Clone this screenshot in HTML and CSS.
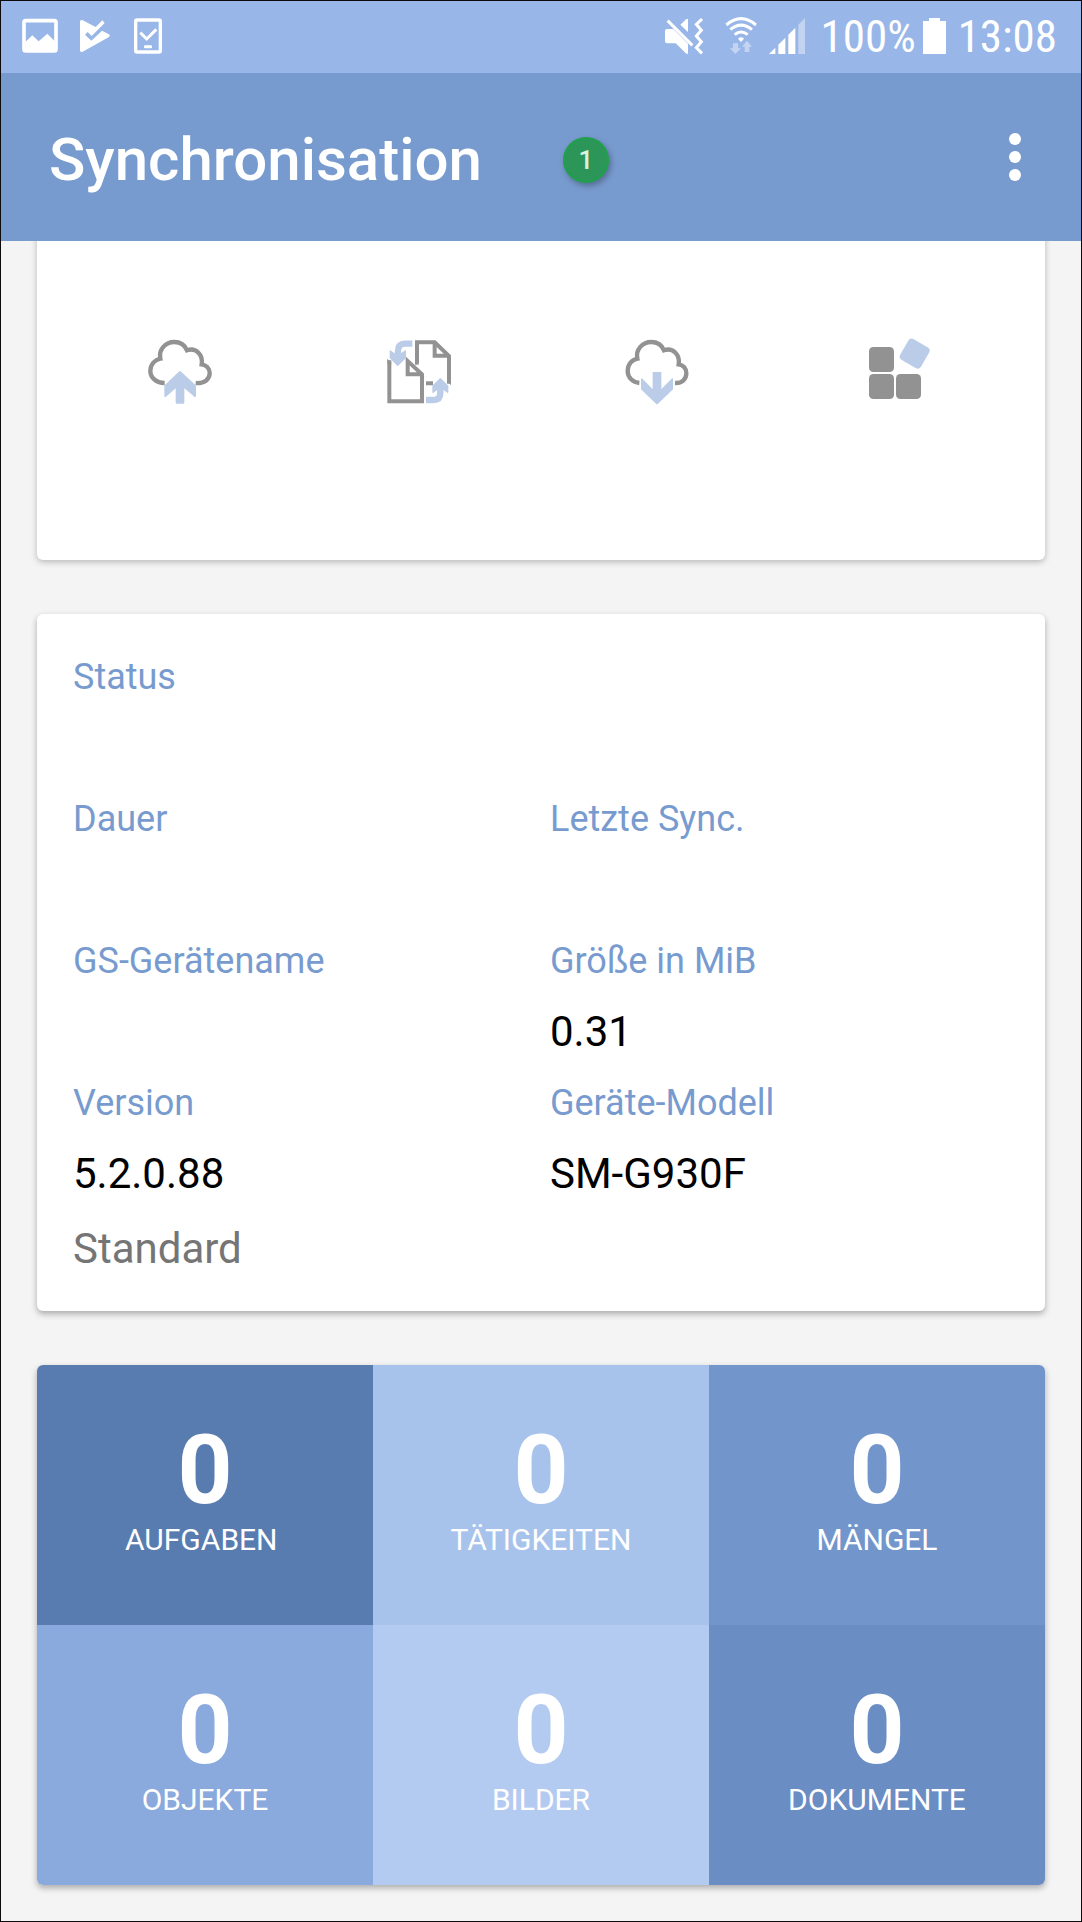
FILE: index.html
```
<!DOCTYPE html>
<html lang="de">
<head>
<meta charset="utf-8">
<meta name="viewport" content="width=device-width, initial-scale=1">
<title>Synchronisation</title>
<link rel="stylesheet" href="styles.css">
</head>
<body>
<div class="statusbar">
  <div class="notifications">
    <svg width="36" height="36" viewBox="66 54 108 108" aria-hidden="true"><rect x="72" y="62" width="96" height="91" rx="5" fill="none" stroke="#fff" stroke-width="11"/><path fill="#fff" d="M76 126L97 106L116 124L142 101L166 125V155H76Z"/></svg>
    <svg width="32" height="36" viewBox="240 54 96 108" aria-hidden="true"><path fill="#fff" d="M240 66Q240 58 248 61L287 81L307 61L314 69L275 108L263 96L255 104L274 122L306 92L327 103Q332 107 327 111L248 155Q240 158 240 150Z"/></svg>
    <svg width="28" height="36" viewBox="402 54 84 108" aria-hidden="true"><rect x="407" y="60" width="74" height="96" rx="4" fill="none" stroke="#fff" stroke-width="10"/><path fill="none" stroke="#fff" stroke-width="9" d="M421 98L440 117L469 88"/><rect x="432" y="136" width="24" height="9" rx="3" fill="#fff"/></svg>
  </div>
  <div class="system">
    <svg class="mute" width="38" height="36" viewBox="69 54 114 108" aria-hidden="true"><path fill="#fff" d="M75 87H94L138 131V161H133L101 130H75Q69 130 69 124V93Q69 87 75 87ZM115 74L133 57H138V96Z"/><path fill="none" stroke="#fff" stroke-width="9" d="M77 62L151 136M180 57L163 73L178 91L163 108L178 125L163 143L180 160"/></svg>
    <svg width="32" height="36" viewBox="250 54 96 108" aria-hidden="true"><g fill="none" stroke="#fff" stroke-width="9"><path d="M254 75Q298 37 343 75"/><path d="M266 89Q298 62 331 89"/><path d="M279 104Q298 88 318 104"/></g><path fill="#fff" d="M289 116Q298 108 307 116L298 126Z"/><path fill="#fff" fill-opacity=".42" d="M274 130H289V145H298L281 162L265 145H274ZM309 156H323V140H331L316 122L301 140H309Z"/></svg>
    <svg width="36" height="36" viewBox="383 54 108 108" aria-hidden="true"><path fill="#fff" d="M383 162L402 143V162ZM411 162V134L432 113V162ZM441 162V104L462 83V162Z"/><path fill="#fff" fill-opacity=".42" d="M471 162V74L491 54V162Z"/></svg>
    <span class="battery">100%<svg width="23" height="36" viewBox="846 54 69 108" aria-hidden="true"><path fill="#fff" d="M864 54H897V63H915V162H846V63H864Z"/></svg></span>
    <time>13:08</time>
  </div>
</div>

<header class="appbar">
  <div class="heading">
    <h1>Synchronisation</h1>
    <span class="badge">1</span>
  </div>
  <button class="menu" type="button" aria-label="Menü"><svg width="12" height="48" viewBox="0 0 12 48" aria-hidden="true"><g fill="#fff"><circle cx="6" cy="6" r="6"/><circle cx="6" cy="24" r="6"/><circle cx="6" cy="42" r="6"/></g></svg></button>
</header>

<main>
  <section class="card actions">
    <button type="button" aria-label="Hochladen"><svg width="72" height="72" viewBox="45 45 216 216" aria-hidden="true"><path fill="none" stroke="#929292" stroke-width="13" d="M107 186C82 186 64 170 64 150C64 130 78 116 94 113C88 85 110 63 136 63C153 63 167 71 174 88C200 78 223 101 218 130C232 132 242 142 242 157C242 175 226 188 200 186"/><path fill="#bacce8" stroke="#bacce8" stroke-width="6" stroke-linejoin="round" d="M153 153L198 195V225L163 195V245H143V195L109 225V195Z"/></svg></button>
    <button type="button" aria-label="Synchronisieren"><svg width="72" height="72" viewBox="759 45 216 216" aria-hidden="true"><g fill="none" stroke="#929292" stroke-width="12"><path d="M861 128V64H914L957 105V188"/><path d="M914 64V104H957M888 187H909"/><path d="M778 118V241H876V160L833 120V160H876"/></g><g fill="#929292"><path d="M772 113L784 125V130H772ZM855 120L867 131H855ZM951 180L963 193V170H951Z"/></g><path fill="none" stroke="#bacce8" stroke-width="19" d="M847 68H825Q804 68 804 90V112M888 237H910Q931 237 931 215V190"/><g fill="#bacce8" stroke="#bacce8" stroke-width="4" stroke-linejoin="round"><path d="M781 90L803 106L826 90V110L803 133L781 110Z"/><path d="M931 173L953 195V214L931 198L909 214V195Z"/></g></svg></button>
    <button type="button" aria-label="Herunterladen"><svg width="72" height="72" viewBox="66 45 216 216" aria-hidden="true"><path fill="none" stroke="#929292" stroke-width="13" d="M121 186C102 184 86 170 86 150C86 130 99 116 115 113C109 85 131 63 157 63C174 63 188 71 195 88C221 78 244 101 239 130C253 132 262 142 262 157C262 175 249 187 228 186"/><path fill="#bacce8" stroke="#bacce8" stroke-width="4" stroke-linejoin="round" d="M163 155H185V209L220 174V204L174 248L128 204V174L163 209Z"/></svg></button>
    <button type="button" aria-label="Module"><svg width="72" height="72" viewBox="783 45 216 216" aria-hidden="true"><g fill="#929292"><rect x="810" y="78" width="75" height="75" rx="13"/><rect x="810" y="159" width="75" height="75" rx="13"/><rect x="891" y="159" width="75" height="75" rx="13"/></g><rect x="911" y="62" width="72" height="72" rx="12" fill="#bacce8" transform="rotate(30 947 98)"/></svg></button>
  </section>

  <section class="card details">
    <dl>
      <div class="wide"><dt>Status</dt><dd></dd></div>
      <div><dt>Dauer</dt><dd></dd></div>
      <div><dt>Letzte Sync.</dt><dd></dd></div>
      <div><dt>GS-Gerätename</dt><dd></dd></div>
      <div><dt>Größe in MiB</dt><dd>0.31</dd></div>
      <div><dt>Version</dt><dd>5.2.0.88</dd></div>
      <div><dt>Geräte-Modell</dt><dd>SM-G930F</dd></div>
    </dl>
    <p class="profile">Standard</p>
  </section>

  <section class="card tiles">
    <div class="tile tasks"><strong>0</strong><span>AUFGABEN&nbsp;</span></div>
    <div class="tile activities"><strong>0</strong><span>TÄTIGKEITEN</span></div>
    <div class="tile defects"><strong>0</strong><span>MÄNGEL</span></div>
    <div class="tile objects"><strong>0</strong><span>OBJEKTE</span></div>
    <div class="tile images"><strong>0</strong><span>BILDER</span></div>
    <div class="tile documents"><strong>0</strong><span>DOKUMENTE</span></div>
  </section>
</main>
</body>
</html>
```
FILE: styles.css
```
* {
  box-sizing: border-box;
  margin: 0;
}

body {
  min-height: 100vh;
  border: 1px solid #0c0a0b;
  background: #f4f4f4;
  color: #000;
  font-family: Roboto, "Liberation Sans", sans-serif;
}

svg {
  display: block;
  flex: none;
  overflow: visible;
}

button {
  padding: 0;
  border: 0;
  background: none;
  cursor: pointer;
}

/* System status bar */
.statusbar {
  display: flex;
  align-items: center;
  justify-content: space-between;
  height: 72px;
  padding: 0 24px 2px 21px;
  background: #98b6e8;
  color: #fff;
  font-family: "Roboto Condensed", Roboto, sans-serif;
  font-size: 45px;
}

.notifications {
  display: flex;
  gap: 22px;
}

.system {
  display: flex;
  align-items: center;
  gap: 12px;
}

.mute {
  margin-right: 10px;
}

.battery {
  display: flex;
  align-items: center;
  gap: 7px;
  padding-left: 4px;
}

/* App bar */
.appbar {
  position: relative;
  z-index: 1;
  display: flex;
  align-items: center;
  justify-content: space-between;
  height: 168px;
  padding: 0 24px 0 48px;
  background: #789bcf;
  color: #fff;
}

.heading {
  display: flex;
  align-items: center;
  gap: 81px;
  padding-top: 6px;
}

h1 {
  font-size: 60px;
  font-weight: 500;
  line-height: 72px;
}

.badge {
  width: 46px;
  height: 46px;
  border: 2px solid #20a04c;
  border-radius: 50%;
  background: #2c9658;
  box-shadow: 2px 3px 6px rgba(0, 0, 0, .3);
  color: #dcf0e0;
  font-size: 26px;
  font-weight: 500;
  line-height: 42px;
  text-align: center;
}

.menu {
  display: flex;
  align-items: center;
  justify-content: center;
  width: 84px;
  height: 84px;
}

/* Cards */
main {
  display: grid;
  gap: 54px;
  padding: 0 36px 36px;
}

.card {
  overflow: hidden;
  border-radius: 6px;
  background: #fff;
  box-shadow: 0 3px 6px rgba(0, 0, 0, .3);
}

/* The first card is scrolled partly under the app bar */
.actions {
  display: grid;
  grid-template-columns: repeat(4, 1fr);
  justify-items: center;
  margin-top: -12px;
  padding: 107px 30px 152px 24px;
  box-shadow: 0 2px 6px rgba(0, 0, 0, .25);
}

.details {
  padding: 28px 36px 23px;
}

dl {
  display: grid;
  grid-template-columns: 1fr 1fr;
  column-gap: 18px;
}

.wide {
  grid-column: 1 / -1;
}

dt {
  color: #789bcf;
  font-size: 36px;
  line-height: 70px;
}

dd {
  min-height: 72px;
  font-size: 42px;
  line-height: 72px;
}

.profile {
  color: #757575;
  font-size: 42px;
  line-height: 78px;
}

/* Counter tiles */
.tiles {
  display: grid;
  grid-template-columns: repeat(3, 1fr);
}

.tile {
  display: flex;
  flex-direction: column;
  align-items: center;
  padding: 57px 0 63px;
  color: #fff;
}

.tile strong {
  font-size: 96px;
  font-weight: 700;
  line-height: 96px;
}

.tile span {
  font-size: 30px;
  line-height: 44px;
}

.tasks { background: #587cb0; }
.activities { background: #a8c3eb; }
.defects { background: #7296cb; }
.objects { background: #8aa9dc; }
.images { background: #b4cbf1; }
.documents { background: #6a8dc4; }
```
